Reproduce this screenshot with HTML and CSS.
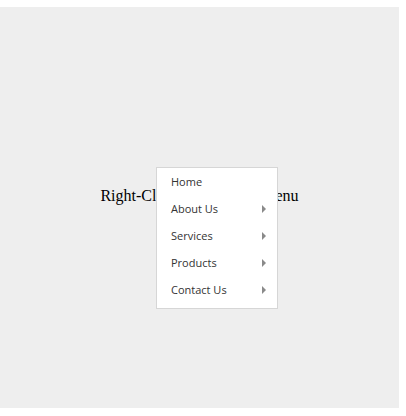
FILE: index.html
```html
<!DOCTYPE html>
<html lang="en">
<head>
    <meta charset="UTF-8">
    <meta name="viewport" content="width=device-width, initial-scale=1.0">
    <title>Context Menu</title>
    <link rel="stylesheet" href="styles.css">
</head>
<body>
    <div class="stage">
        <p class="hint">Right-Click here to open menu</p>

        <!-- Menu contextual -->
        <ul class="context-menu">
            <li class="menu-item">Home</li>
            <li class="menu-item has-sub">About Us</li>
            <li class="menu-item has-sub">Services</li>
            <li class="menu-item has-sub">Products</li>
            <li class="menu-item has-sub">Contact Us</li>
        </ul>
    </div>
</body>
</html>
```

FILE: styles.css
```css
/* Estilos generales */
body {
    margin: 0;
    padding: 7px 0 0;
    background-color: #fff;
}

.stage {
    position: relative;
    width: 399px;
    height: 401px;
    background-color: #eeeeee;
    font-family: 'Liberation Serif', 'Times New Roman', serif;
    font-size: 16px;
    color: #000;
}

.hint {
    margin: 0;
    padding-top: 180px;
    text-align: center;
}

.context-menu {
    position: absolute;
    left: 156px;
    top: 160px;
    width: 120px;
    margin: 0;
    padding: 0 0 5px;
    list-style: none;
    background-color: #fff;
    border: 1px solid #d6d6d6;
    font-family: 'Open Sans', 'Noto Sans', sans-serif;
    font-size: 11px;
    color: #333;
}

.menu-item {
    display: flex;
    align-items: center;
    justify-content: space-between;
    height: 27px;
    padding: 0 11px 0 14px;
    cursor: default;
}

.has-sub::after {
    content: '';
    border-left: 4px solid #8a8a8a;
    border-top: 4px solid transparent;
    border-bottom: 4px solid transparent;
}
```
